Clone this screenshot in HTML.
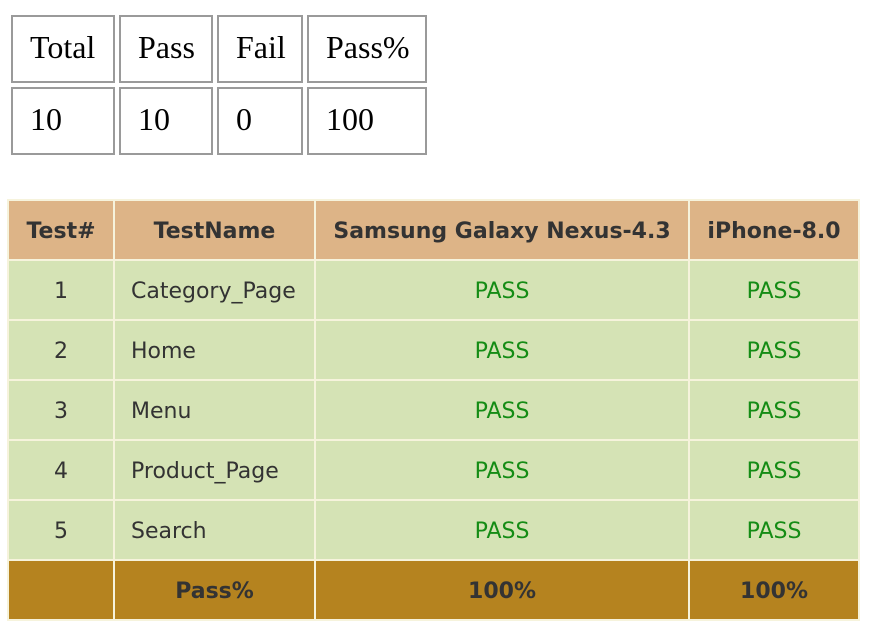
<!DOCTYPE html>
<html><head><style>
body{margin:0;width:880px;height:633px;background:#fff;position:relative;overflow:hidden}
.b{position:absolute;border:2px solid #9a9a9a;box-sizing:border-box;font-family:"Liberation Serif",serif;font-size:32px;color:#000;line-height:1;padding-left:17px;padding-top:14px}
table{position:absolute;left:7px;top:199px;border-collapse:separate;border-spacing:2px;background:#f6f3dc;font-family:"DejaVu Sans",Verdana,sans-serif;font-size:22px;color:#333}
td{height:58px;padding:3px 0 0 0;box-sizing:border-box;text-align:center;background:#d5e3b5}
tr.h td{background:#ddb487;font-weight:bold}
tr.f td{background:#b5831f;font-weight:bold}
td.n{text-align:left;padding-left:16px}
.p{color:#158c15}
</style></head><body>
<div class="b" style="left:11px;top:15px;width:104px;height:68px">Total</div>
<div class="b" style="left:119px;top:15px;width:94px;height:68px">Pass</div>
<div class="b" style="left:217px;top:15px;width:86px;height:68px">Fail</div>
<div class="b" style="left:307px;top:15px;width:120px;height:68px">Pass%</div>
<div class="b" style="left:11px;top:87px;width:104px;height:68px">10</div>
<div class="b" style="left:119px;top:87px;width:94px;height:68px">10</div>
<div class="b" style="left:217px;top:87px;width:86px;height:68px">0</div>
<div class="b" style="left:307px;top:87px;width:120px;height:68px">100</div>
<table>
<tr class="h"><td style="width:104px">Test#</td><td style="width:199px">TestName</td><td style="width:372px">Samsung Galaxy Nexus-4.3</td><td style="width:168px">iPhone-8.0</td></tr>
<tr><td>1</td><td class="n">Category_Page</td><td class="p">PASS</td><td class="p">PASS</td></tr>
<tr><td>2</td><td class="n">Home</td><td class="p">PASS</td><td class="p">PASS</td></tr>
<tr><td>3</td><td class="n">Menu</td><td class="p">PASS</td><td class="p">PASS</td></tr>
<tr><td>4</td><td class="n">Product_Page</td><td class="p">PASS</td><td class="p">PASS</td></tr>
<tr><td>5</td><td class="n">Search</td><td class="p">PASS</td><td class="p">PASS</td></tr>
<tr class="f"><td></td><td>Pass%</td><td>100%</td><td>100%</td></tr>
</table>
</body></html>
